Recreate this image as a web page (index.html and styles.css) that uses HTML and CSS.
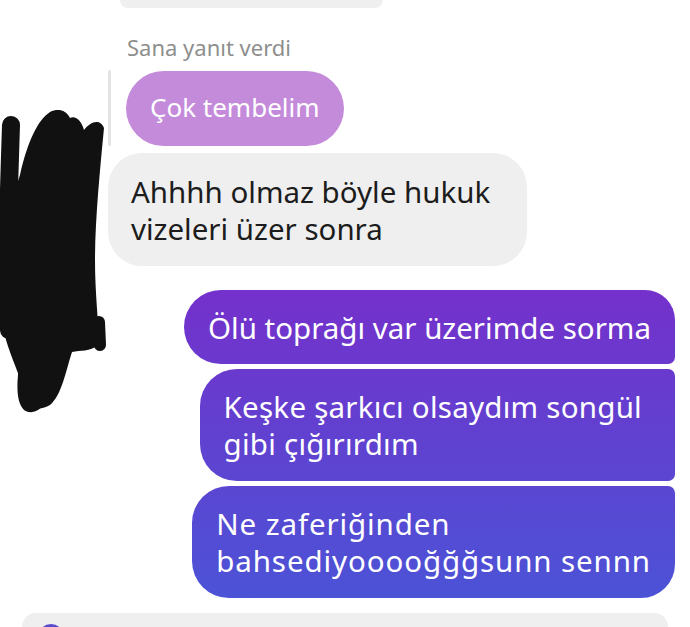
FILE: index.html
```html
<!DOCTYPE html>
<html lang="tr">
<head>
<meta charset="utf-8">
<link rel="stylesheet" href="styles.css">
</head>
<body>
<div class="chat">
  <div class="prev-bubble"></div>
  <div class="reply-label">Sana yanıt verdi</div>
  <div class="reply-row">
    <div class="reply-line"></div>
    <div class="bubble quoted">Çok tembelim</div>
  </div>
  <div class="bubble incoming">Ahhhh olmaz böyle hukuk<br>vizeleri üzer sonra</div>
  <div class="sent-group">
    <div class="bubble sent first">Ölü toprağı var üzerimde sorma</div>
    <div class="bubble sent middle">Keşke şarkıcı olsaydım songül<br>gibi çığırırdım</div>
    <div class="bubble sent last">Ne zaferiğinden<br>bahsediyooooğğğsunn sennn</div>
  </div>
  <div class="composer">
    <div class="composer-icon"></div>
  </div>
</div>
<svg class="scribble" width="115" height="320" viewBox="0 0 115 320">
  <g fill="none" stroke="#111" stroke-linecap="round" stroke-linejoin="round">
    <path d="M11 25 C9 90 6 160 9 230" stroke-width="18"/>
    <path d="M30 240 C22 270 20 300 28 306 C36 310 48 295 58 270" stroke-width="11"/>
    <path d="M99 222 L100 245" stroke-width="12"/>
  </g>
  <path fill="#111" d="M20 75 C28 40 38 20 50 12 C58 8 66 10 70 18 C76 15 82 22 84 30 C90 22 100 18 104 28 C100 70 95 120 95 160 C95 200 100 230 98 245 C90 252 80 250 72 252 C66 270 62 295 50 305 C38 312 28 308 25 295 C20 275 12 260 6 240 C2 180 4 120 20 75 Z"/>
</svg>
</body>
</html>
```

FILE: styles.css
```css
html, body {
  margin: 0;
  padding: 0;
  background: #ffffff;
}

body {
  width: 690px;
  height: 627px;
  overflow: hidden;
  position: relative;
  font-family: "Noto Sans", "Liberation Sans", sans-serif;
}

.chat {
  display: flex;
  flex-direction: column;
  align-items: flex-start;
}

.prev-bubble {
  width: 263px;
  height: 8px;
  margin-left: 120px;
  background: #efefef;
  border-radius: 0 0 26px 26px;
}

.reply-label {
  margin: 26px 0 0 127px;
  font-size: 22px;
  line-height: 26px;
  color: #8e8e8e;
}

.reply-row {
  display: flex;
  align-items: stretch;
  margin: 10px 0 0 108px;
}

.reply-line {
  width: 3px;
  background: #e3e3e3;
  border-radius: 2px;
  margin-right: 15px;
}

.bubble {
  font-size: 29.5px;
  line-height: 37px;
  white-space: nowrap;
}

.quoted {
  margin-top: 1px;
  background: #c58bdb;
  color: #ffffff;
  font-size: 26px;
  padding: 18px 24px 20px;
  border-radius: 38px;
}

.incoming {
  margin: 7px 0 0 108px;
  background: #efefef;
  color: #1c1c1c;
  padding: 20px 37px 19px 23px;
  border-radius: 34px;
}

.sent-group {
  align-self: flex-end;
  margin: 24px 15px 0 0;
  display: flex;
  flex-direction: column;
  align-items: flex-end;
  gap: 5px;
}

.sent {
  color: #ffffff;
  padding: 19px 24px 18px;
  background: linear-gradient(180deg, #7530cb 285px, #4b53d6 600px);
  background-attachment: fixed;
}

.sent.first {
  border-radius: 37px 30px 7px 37px;
}

.sent.middle {
  padding: 19px 33px 19px 24px;
  letter-spacing: 0.25px;
  border-radius: 37px 7px 7px 37px;
}

.sent.last {
  padding: 19px 24px 19px 24px;
  letter-spacing: 0.9px;
  border-radius: 37px 7px 34px 37px;
}

.composer {
  align-self: stretch;
  margin: 15px 22px 0 22px;
  height: 14px;
  overflow: hidden;
  background: #efefef;
  border-radius: 32px 32px 0 0;
  padding: 11px 0 0 16px;
  box-sizing: border-box;
}

.composer-icon {
  width: 26px;
  height: 26px;
  border-radius: 50%;
  background: #5a4bd1;
}

.scribble {
  position: absolute;
  left: 0;
  top: 100px;
}
```
